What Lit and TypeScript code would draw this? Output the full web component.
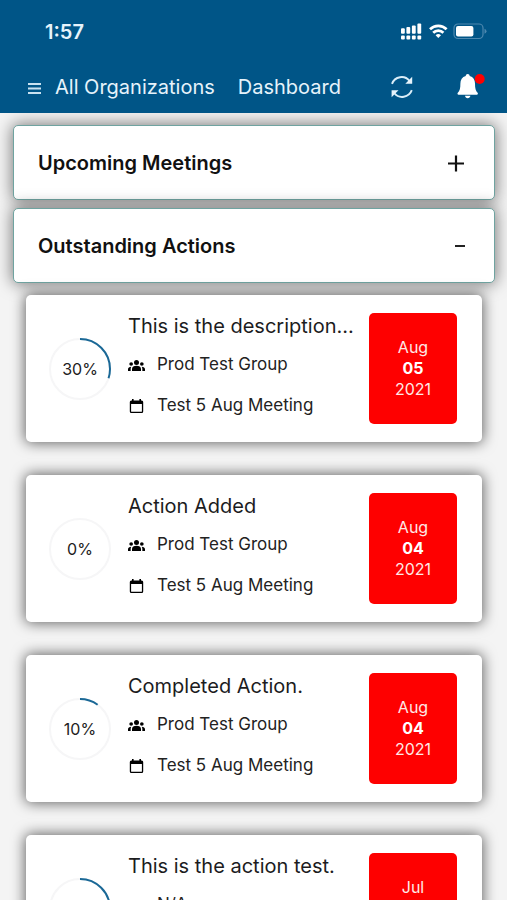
import { LitElement, html, css, svg } from "lit";
import { customElement, property, state } from "lit/decorators.js";

interface ActionItem {
  title: string;
  group: string;
  meeting: string;
  percent: number;
  month: string;
  day: string;
  year: string;
}

const ACTIONS: ActionItem[] = [
  { title: "This is the description...", group: "Prod Test Group", meeting: "Test 5 Aug Meeting", percent: 30, month: "Aug", day: "05", year: "2021" },
  { title: "Action Added", group: "Prod Test Group", meeting: "Test 5 Aug Meeting", percent: 0, month: "Aug", day: "04", year: "2021" },
  { title: "Completed Action.", group: "Prod Test Group", meeting: "Test 5 Aug Meeting", percent: 10, month: "Aug", day: "04", year: "2021" },
  { title: "This is the action test.", group: "N/A", meeting: "N/A", percent: 30, month: "Jul", day: "30", year: "2021" },
];

@customElement("progress-ring")
export class ProgressRing extends LitElement {
  @property({ type: Number }) value = 0;

  static styles = css`
    :host {
      display: grid;
      width: 62px;
      height: 62px;
      place-items: center;
    }
    svg, span { grid-area: 1 / 1; }
    .track { fill: none; stroke: #f6f6f7; stroke-width: 2; }
    .arc { fill: none; stroke: #1a6896; stroke-width: 2; }
    .label { font-size: 16px; line-height: 20px; color: #222; }
  `;

  render() {
    return html`
      <svg width="62" height="62" viewBox="0 0 62 62" aria-hidden="true">
        <circle class="track" cx="31" cy="31" r="30"></circle>
        ${this.value > 0
          ? svg`<circle class="arc" cx="31" cy="31" r="30" pathLength="100"
              stroke-dasharray="${this.value} 100" transform="rotate(-90 31 31)"></circle>`
          : null}
      </svg>
      <span class="label">${this.value}%</span>
    `;
  }
}

@customElement("action-card")
export class ActionCard extends LitElement {
  @property({ attribute: false }) item!: ActionItem;

  static styles = css`
    :host { display: block; }
    .card {
      display: flex;
      align-items: center;
      padding: 18px 25px 18px 23px;
      background: #fff;
      border-radius: 5px;
      box-shadow: 0 0 14px 1px rgba(0, 0, 0, 0.6);
    }
    .body {
      flex: 1;
      min-width: 0;
      align-self: flex-start;
      margin-left: 17px;
    }
    .title {
      margin: 0 0 14px;
      font-size: 20px;
      line-height: 26px;
      font-weight: 400;
      color: #1c1c1e;
      white-space: nowrap;
    }
    .row {
      display: flex;
      align-items: center;
      gap: 12px;
      margin: 0;
      font-size: 17px;
      line-height: 22px;
      color: #222;
    }
    .row + .row { margin-top: 19px; }
    .row svg { flex: none; margin-top: 3px; }
    .date {
      display: flex;
      flex-direction: column;
      justify-content: center;
      align-items: center;
      width: 88px;
      height: 111px;
      border-radius: 5px;
      background: #fe0000;
      color: #ffe9e6;
      font-size: 16px;
      line-height: 21px;
    }
    .day { font-weight: 700; color: #fff; }
  `;

  render() {
    const a = this.item;
    return html`
      <article class="card">
        <progress-ring .value=${a.percent}></progress-ring>
        <div class="body">
          <h3 class="title">${a.title}</h3>
          <p class="row">
            <svg width="17" height="17" viewBox="0 0 51 51" aria-hidden="true">
              <circle cx="25.500" cy="16.500" r="7.500"></circle>
              <circle cx="9.500" cy="21" r="5.500"></circle>
              <circle cx="41.500" cy="21" r="5.500"></circle>
              <path d="M12 42v-6c0-6 6-9.500 13.500-9.500S39 30 39 36v6zM0 42v-5c0-5 4-8 10-8-1.500 2-2 4-2 7v6zM51 42v-5c0-5-4-8-10-8 1.500 2 2 4 2 7v6z"></path>
            </svg>
            <span>${a.group}</span>
          </p>
          <p class="row">
            <svg width="17" height="17" viewBox="0 0 17 17" aria-hidden="true">
              <path fill-rule="evenodd" d="M4 1h1.600v1.500h5.800V1H13v1.500h.7a1.500 1.500 0 0 1 1.500 1.500v9.500a1.500 1.500 0 0 1-1.500 1.500H3.300a1.500 1.500 0 0 1-1.500-1.500V4a1.500 1.500 0 0 1 1.500-1.500H4zM3.100 6v7.200q0 .5.500.5h9.800q.5 0 .5-.5V6z"></path>
            </svg>
            <span>${a.meeting}</span>
          </p>
        </div>
        <div class="date">
          <span>${a.month}</span>
          <span class="day">${a.day}</span>
          <span>${a.year}</span>
        </div>
      </article>
    `;
  }
}

@customElement("app-root")
export class AppRoot extends LitElement {
  @state() private meetingsOpen = false;
  @state() private actionsOpen = true;

  static styles = css`
    :host {
      display: flex;
      flex-direction: column;
      height: 100vh;
      background: #f4f4f4;
      font-family: Inter, "Liberation Sans", sans-serif;
      color: #111;
    }
    button {
      font: inherit;
      color: inherit;
      background: none;
      border: 0;
      padding: 0;
      cursor: pointer;
    }
    .top { flex: none; padding-bottom: 4px; background: #005587; color: #e6f3fb; }
    .status {
      display: flex;
      align-items: center;
      justify-content: space-between;
      height: 64px;
      padding: 0 20px 0 45px;
    }
    .time { font-size: 20px; line-height: 22px; font-weight: 600; }
    .nav {
      display: flex;
      align-items: center;
      height: 45px;
      padding: 0 21px 0 28px;
      font-size: 20px;
      line-height: 24px;
    }
    .menu { display: flex; align-items: center; gap: 14px; }
    .link { margin-left: 23px; color: inherit; text-decoration: none; }
    .tools { display: flex; align-items: center; gap: 42px; margin-left: auto; }
    .tools button { display: flex; }
    .content {
      flex: 1;
      min-height: 0;
      overflow: auto;
      scrollbar-width: none;
      padding: 12px 12px 0 13px;
    }
    .panels { display: flex; flex-direction: column; gap: 8px; }
    .heading { margin: 0; font-size: 20px; line-height: 24px; font-weight: 600; }
    .panel {
      display: flex;
      align-items: center;
      justify-content: space-between;
      width: 100%;
      height: 75px;
      padding: 0 29px 0 24px;
      box-sizing: border-box;
      background: #fff;
      border: 1px solid #6fa3a0;
      border-radius: 5px;
      box-shadow: 0 0 16px 1px rgba(0, 0, 0, 0.5);
    }
    .cards {
      display: flex;
      flex-direction: column;
      gap: 33px;
      padding: 12px 13px 32px;
    }
  `;

  private sign(open: boolean) {
    return open
      ? html`<svg width="11" height="18" viewBox="0 0 11 18" aria-hidden="true"><path d="M1 9h10" stroke="#222" stroke-width="2"></path></svg>`
      : html`<svg width="18" height="18" viewBox="0 0 18 18" aria-hidden="true"><path d="M1 9.500h16M9 1.500v16" stroke="#111" stroke-width="2.200"></path></svg>`;
  }

  render() {
    return html`
      <header class="top">
        <div class="status">
          <span class="time">1:57</span>
          <svg width="87" height="20" viewBox="0 0 87 20" fill="#fff" aria-hidden="true">
            <rect x="1" y="6.300" width="3.800" height="5.500" rx="1"></rect>
            <rect x="6.400" y="5" width="3.800" height="6.800" rx="1"></rect>
            <rect x="11.900" y="3.500" width="3.800" height="8.300" rx="1"></rect>
            <rect x="17.400" y="1.500" width="3.800" height="10.300" rx="1"></rect>
            <rect x="1" y="13.500" width="3.800" height="4" rx="1"></rect>
            <rect x="6.400" y="13.500" width="3.800" height="4" rx="1"></rect>
            <rect x="11.900" y="13.500" width="3.800" height="4" rx="1"></rect>
            <rect x="17.400" y="13.500" width="3.800" height="4" rx="1"></rect>
            <g fill="none" stroke="#fff" stroke-width="2.700">
              <path d="M30 7.200a11.800 11.800 0 0 1 16.600 0"></path>
              <path d="M33.200 10.700a7.200 7.200 0 0 1 10.200 0"></path>
            </g>
            <path d="M38.300 16l-2.700-2.800a3.900 3.900 0 0 1 5.400 0z"></path>
            <rect x="54" y="2" width="29" height="14.500" rx="4" fill="none" stroke="#4d88af" stroke-width="1.200"></rect>
            <path d="M84.500 6.800q2 .6 2 2.500t-2 2.500z" fill="#4d88af"></path>
            <rect x="56" y="4" width="17.400" height="10.500" rx="2"></rect>
          </svg>
        </div>
        <nav class="nav">
          <button class="menu">
            <svg width="13" height="16" viewBox="0 0 13 16" aria-hidden="true">
              <path d="M0 5h13M0 9.500h13M0 14h13" stroke="#c9e2f1" stroke-width="2"></path>
            </svg>
            <span>All Organizations</span>
          </button>
          <a class="link" href="#dashboard">Dashboard</a>
          <div class="tools">
            <button aria-label="Refresh">
              <svg width="24" height="24" viewBox="0 0 24 24" aria-hidden="true">
                <g fill="none" stroke="#d9edf8" stroke-width="1.900">
                  <path d="M2 8.800A10.200 10.200 0 0 1 19.600 6"></path>
                  <path d="M21.800 15.200A10.200 10.200 0 0 1 4.200 18"></path>
                </g>
                <path d="M22.200 1.800v6.900h-6.900zM1.600 22.200v-6.900h6.900z" fill="#e6f3fb"></path>
              </svg>
            </button>
            <button aria-label="Notifications">
              <svg width="30" height="26" viewBox="0 0 30 26" aria-hidden="true">
                <path fill="#fff" d="M11.700 0c1.200 0 1.900.8 2 2 3.600 1 5.300 3.900 5.300 7.500 0 4.800.7 7.300 2.600 9.200.6.700.3 2-.8 2H2.600c-1.100 0-1.400-1.300-.8-2 1.900-1.900 2.600-4.400 2.600-9.200 0-3.600 1.700-6.500 5.300-7.500.1-1.200.8-2 2-2zM9 21.800h5.400c-.2 1.500-1.300 2.400-2.700 2.400S9.200 23.300 9 21.800z"></path>
                <circle cx="23.700" cy="5" r="5" fill="#fe0000"></circle>
              </svg>
            </button>
          </div>
        </nav>
      </header>
      <main class="content">
        <div class="panels">
          <h2 class="heading">
            <button class="panel" aria-expanded=${this.meetingsOpen} @click=${() => (this.meetingsOpen = !this.meetingsOpen)}>
              <span>Upcoming Meetings</span>${this.sign(this.meetingsOpen)}
            </button>
          </h2>
          <h2 class="heading">
            <button class="panel" aria-expanded=${this.actionsOpen} @click=${() => (this.actionsOpen = !this.actionsOpen)}>
              <span>Outstanding Actions</span>${this.sign(this.actionsOpen)}
            </button>
          </h2>
        </div>
        ${this.actionsOpen
          ? html`<div class="cards">${ACTIONS.map((a) => html`<action-card .item=${a}></action-card>`)}</div>`
          : null}
      </main>
    `;
  }
}
